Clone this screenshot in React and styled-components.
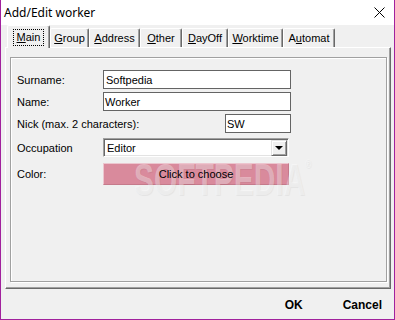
import React from 'react';
import styled, { createGlobalStyle } from 'styled-components';

const GlobalStyle = createGlobalStyle`
  html, body {
    margin: 0;
    padding: 0;
    background: #f0f0f0;
  }
  * {
    box-sizing: border-box;
  }
`;

const Window = styled.div`
  position: relative;
  width: 395px;
  height: 320px;
  display: flex;
  flex-direction: column;
  background: #f0f0f0;
  border: 1px solid #a1219d;
  border-top: none;
  font-family: "Liberation Sans", Arial, sans-serif;
  font-size: 11px;
  color: #000;
  overflow: hidden;
`;

const TitleBar = styled.div`
  height: 25px;
  flex: none;
  display: flex;
  align-items: center;
  justify-content: space-between;
  padding: 0 9px 1px 3px;
  background: #fff;
`;

const Title = styled.span`
  font-family: "Noto Sans", "Open Sans", sans-serif;
  font-size: 12px;
`;

const CloseIcon = styled.svg`
  width: 11px;
  height: 11px;
  display: block;
`;

const TabStrip = styled.div`
  height: 22px;
  flex: none;
  display: flex;
  align-items: flex-end;
  padding-left: 6px;
  position: relative;
  z-index: 2;
`;

const Tab = styled.div`
  width: ${p => p.$w}px;
  height: ${p => (p.$active ? 23 : 19)}px;
  margin-bottom: ${p => (p.$active ? -1 : 0)}px;
  display: flex;
  align-items: center;
  justify-content: center;
  padding-top: ${p => (p.$active ? 1 : 0)}px;
  background: #f0f0f0;
  border-top: 1px solid #fff;
  border-left: 1px solid #fff;
  border-right: 1px solid #696969;
  box-shadow: inset -1px 0 0 #a0a0a0;
  border-radius: 2px 2px 0 0;
`;

const TabLabel = styled.span`
  padding: 1px 3px 2px;
  border: 1px dotted ${p => (p.$focus ? '#000' : 'transparent')};
  line-height: 12px;
  white-space: nowrap;
`;

const Key = styled.span`
  text-decoration: underline;
`;

const Panel = styled.div`
  height: 242px;
  flex: none;
  margin: 0 3px 0 4px;
  padding: 9px 3px 6px 4px;
  display: flex;
  border-top: 1px solid #fff;
  border-left: 1px solid #fff;
  border-right: 1px solid #696969;
  border-bottom: 1px solid #696969;
  box-shadow: inset -1px -1px 0 #a0a0a0;
`;

const GroupBox = styled.div`
  flex: 1;
  padding: 12px 0 0 6px;
  border: 1px solid #a0a0a0;
  box-shadow: inset 1px 1px 0 #fff, 1px 1px 0 #fff;
`;

const Form = styled.div`
  width: 274px;
  display: flex;
  flex-direction: column;
`;

const Row = styled.div`
  display: flex;
  align-items: center;
  height: ${p => p.$h || 19}px;
  margin-top: ${p => p.$top || 0}px;
`;

const Label = styled.span`
  width: ${p => (p.$grow ? 'auto' : '86px')};
  flex: ${p => (p.$grow ? 1 : 'none')};
  white-space: nowrap;
`;

const TextBox = styled.div`
  width: ${p => p.$w}px;
  height: 19px;
  display: flex;
  align-items: center;
  padding-left: ${p => p.$pad}px;
  background: #fff;
  border: 1px solid #646464;
  white-space: nowrap;
`;

const Combo = styled.div`
  width: 186px;
  height: 19px;
  display: flex;
  align-items: center;
  justify-content: space-between;
  background: #fff;
  border-top: 1px solid #a0a0a0;
  border-left: 1px solid #a0a0a0;
  border-right: 1px solid #fff;
  border-bottom: 1px solid #fff;
  box-shadow: inset 1px 1px 0 #696969, inset -1px -1px 0 #e3e3e3;
  padding: 1px 1px 1px 3px;
`;

const ComboButton = styled.div`
  width: 16px;
  height: 16px;
  display: flex;
  align-items: center;
  justify-content: center;
  background: #f0f0f0;
  border-top: 1px solid #e3e3e3;
  border-left: 1px solid #e3e3e3;
  border-right: 1px solid #696969;
  border-bottom: 1px solid #696969;
  box-shadow: inset 1px 1px 0 #fff, inset -1px -1px 0 #a0a0a0;
`;

const Arrow = styled.div`
  width: 0;
  height: 0;
  border-left: 4px solid transparent;
  border-right: 4px solid transparent;
  border-top: 4px solid #000;
`;

const ColorButton = styled.div`
  width: 186px;
  height: 22px;
  display: flex;
  align-items: center;
  justify-content: center;
  background: ${p => p.$color};
  border-top: 1px solid #ecc6cf;
  border-left: 1px solid #ecc6cf;
  border-right: 1px solid #c57a8b;
  border-bottom: 1px solid #c57a8b;
`;

const ButtonText = styled.span`
  position: relative;
  z-index: 6;
`;

const Footer = styled.div`
  flex: 1;
  display: flex;
  align-items: center;
  justify-content: flex-end;
  gap: 40px;
  padding: 1px 12px 0 0;
`;

const FooterButton = styled.span`
  font-weight: bold;
  font-size: 12px;
`;

const Watermark = styled.div`
  position: absolute;
  left: 133px;
  top: 158px;
  font-family: "Liberation Sans", Arial, sans-serif;
  font-weight: bold;
  font-size: 44px;
  line-height: 1;
  color: rgba(255, 255, 255, 0.36);
  text-shadow: 1px 1px 1px rgba(0, 0, 0, 0.05);
  transform: scaleX(0.68);
  transform-origin: left top;
  pointer-events: none;
  white-space: nowrap;
  z-index: 5;
`;

const Reg = styled.span`
  font-size: 12px;
  vertical-align: top;
`;

const tabs = [
  { key: 'M', rest: 'ain', w: 43, active: true },
  { key: 'G', rest: 'roup', w: 39 },
  { key: 'A', rest: 'ddress', w: 51 },
  { key: 'O', rest: 'ther', w: 42 },
  { key: 'D', rest: 'ayOff', w: 46 },
  { key: 'W', rest: 'orktime', w: 55 },
  { pre: 'A', key: 'u', rest: 'tomat', w: 52 },
];

export default function App() {
  return (
    <>
      <GlobalStyle />
      <Window>
        <TitleBar>
          <Title>Add/Edit worker</Title>
          <CloseIcon viewBox="0 0 11 11">
            <path d="M0.5 0.5 L10.5 10.5 M10.5 0.5 L0.5 10.5" stroke="#000" strokeWidth="1" fill="none" />
          </CloseIcon>
        </TitleBar>

        <TabStrip>
          {tabs.map((t, i) => (
            <Tab key={i} $w={t.w} $active={t.active}>
              <TabLabel $focus={t.active}>
                {t.pre}
                <Key>{t.key}</Key>
                {t.rest}
              </TabLabel>
            </Tab>
          ))}
        </TabStrip>

        <Panel>
          <GroupBox>
            <Form>
              <Row>
                <Label>Surname:</Label>
                <TextBox $w={188} $pad={2}>Softpedia</TextBox>
              </Row>
              <Row $top={3}>
                <Label>Name:</Label>
                <TextBox $w={188} $pad={1}>Worker</TextBox>
              </Row>
              <Row $top={3}>
                <Label $grow>Nick (max. 2 characters):</Label>
                <TextBox $w={66} $pad={1}>SW</TextBox>
              </Row>
              <Row $top={5}>
                <Label>Occupation</Label>
                <Combo>
                  <span>Editor</span>
                  <ComboButton>
                    <Arrow />
                  </ComboButton>
                </Combo>
              </Row>
              <Row $top={6} $h={22}>
                <Label>Color:</Label>
                <ColorButton $color="#d98a9c">
                  <ButtonText>Click to choose</ButtonText>
                </ColorButton>
              </Row>
            </Form>
          </GroupBox>
        </Panel>

        <Footer>
          <FooterButton>OK</FooterButton>
          <FooterButton>Cancel</FooterButton>
        </Footer>

        <Watermark>
          SOFTPEDIA<Reg>®</Reg>
        </Watermark>
      </Window>
    </>
  );
}
